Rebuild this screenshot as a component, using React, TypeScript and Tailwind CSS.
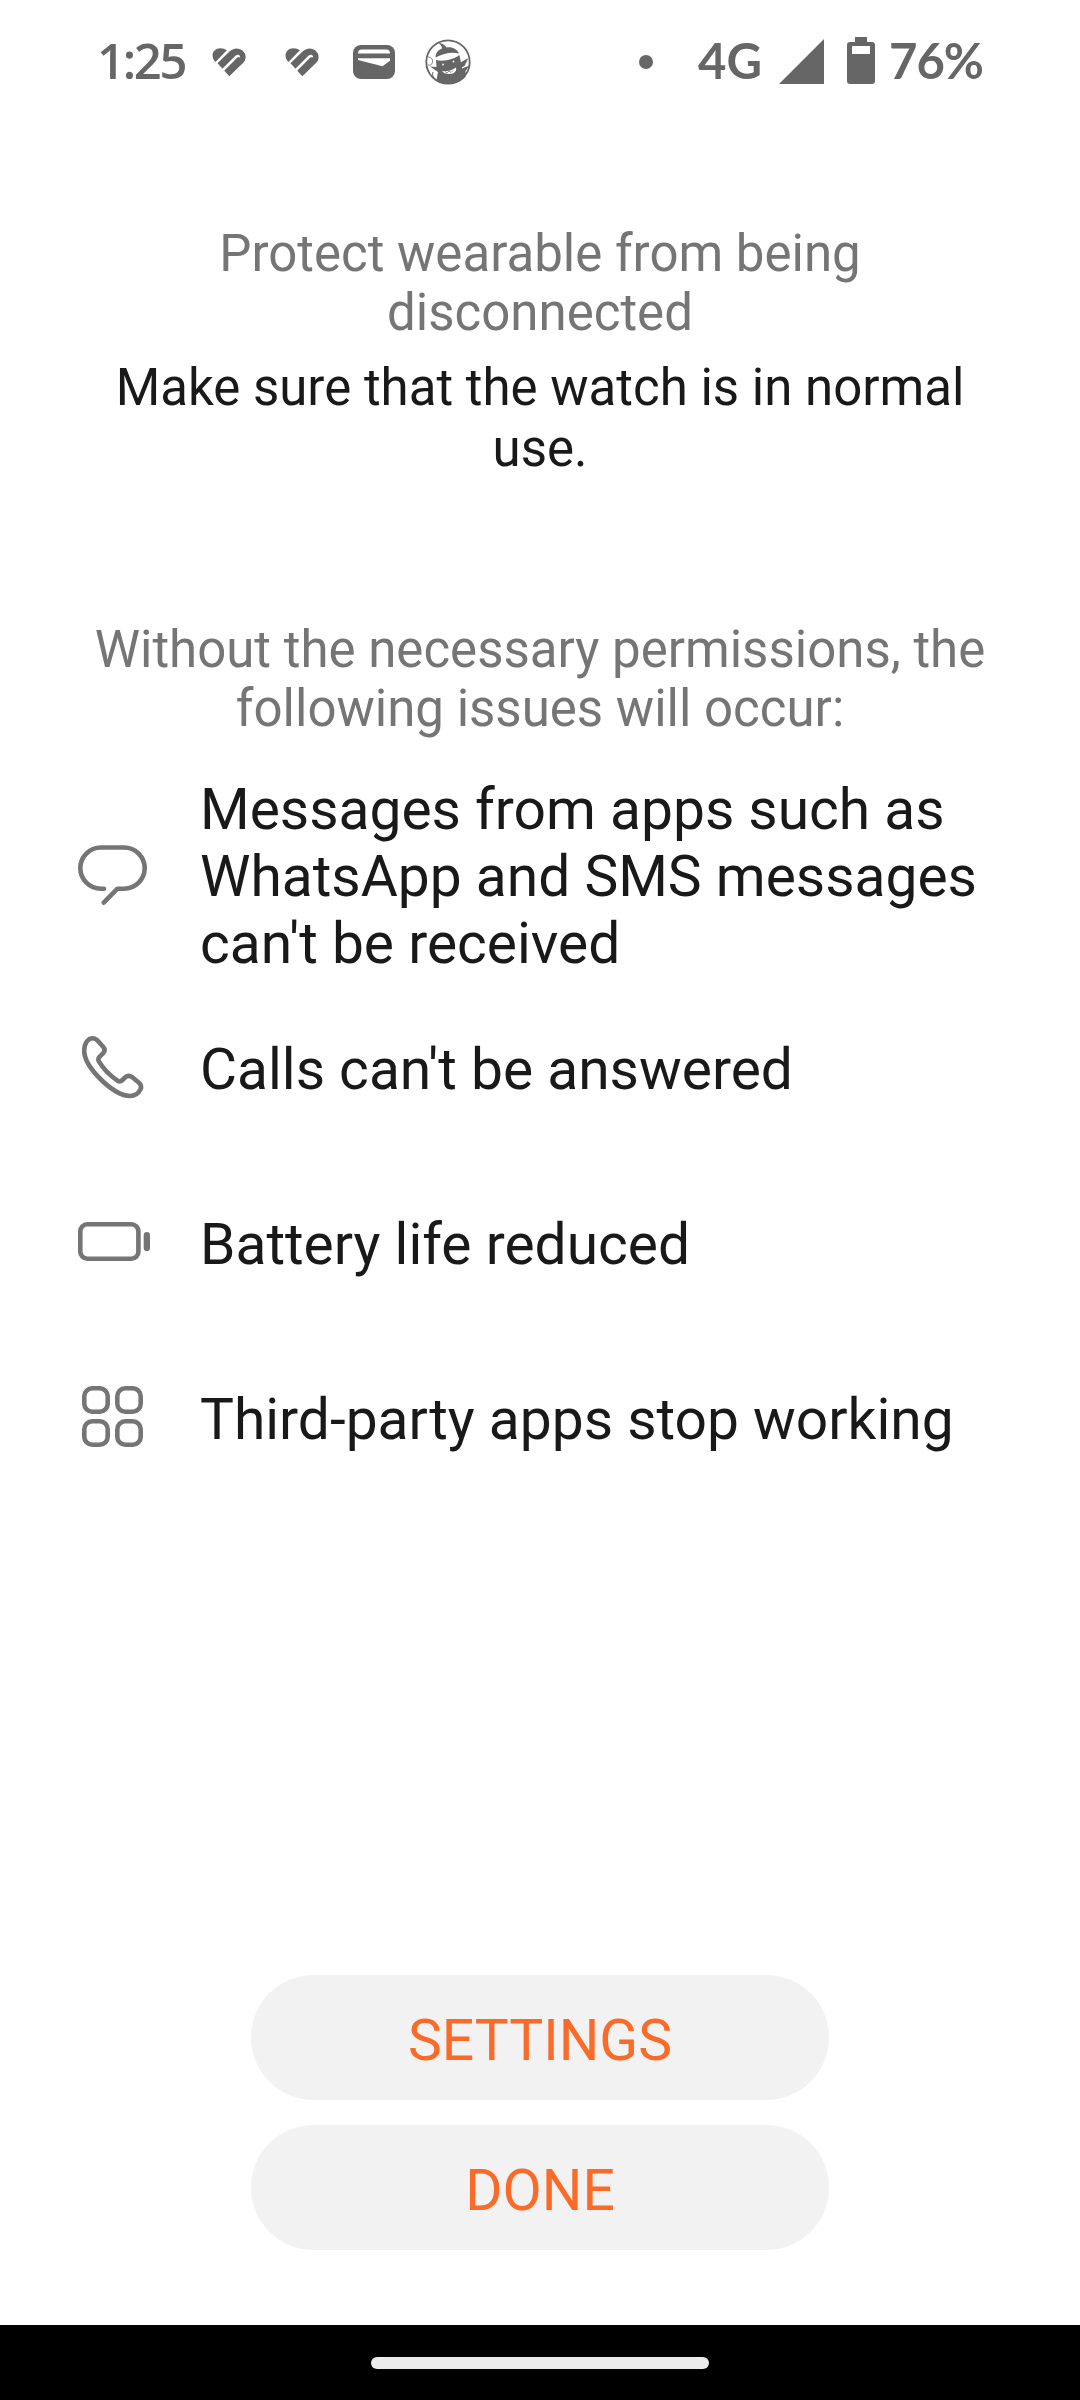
import type { ReactNode } from 'react';

interface Issue {
    id: string;
    text: string;
    icon: ReactNode;
    rowClass: string;
    textClass: string;
}

const HeartIcon = () => (
    <svg width="34" height="29" viewBox="0 0 34 29">
        <path d="M3.500 14C-2 8.500.5.300 8.500.300c2.500 0 4.500.7 6.300 2z" fill="#666" />
        <path d="M5.500 15.200 18 3C22-.500 27.500-.500 31 3s3.500 8.500 0 12L17.300 28.200z" fill="#666" />
        <path d="M9 24 24.500 8.500c1.200-1 2.500-.5 2.500.8" fill="none" stroke="#fff" strokeWidth="2.600" />
    </svg>
);

const WalletIcon = () => (
    <svg width="42" height="34" viewBox="0 0 42 34">
        <rect width="42" height="34" rx="8" fill="#666" />
        <path d="M5 8.500C5 5.500 6.500 4.500 8.500 4.500h25c2 0 3.500 1 3.500 4z" fill="#fff" />
        <path d="M5 13.200h32v2.500L29.500 21.200 5 15z" fill="#fff" />
    </svg>
);

const AvatarIcon = () => (
    <svg width="46" height="46" viewBox="0 0 46 46">
        <circle cx="23" cy="23" r="21.700" fill="#fff" stroke="#666" strokeWidth="1.800" />
        <path d="M13 3.500c4 .5 7 2.500 8.500 5C27 7.500 32 10 34 14.500c-7-2-15-.5-23.500 4C10.500 14 13 11 17 9.500 17 7 15 5 13 3.500z" fill="#666" />
        <path d="M11 21C19 23 29 20 34.500 16l2.500 13.500 7.500-3-4 5.500.5 5C34 46.500 19 47 11.500 41l1.500-8-8-5.500 6.500.5z" fill="#666" />
        <path d="M34.500 24 43.500 19l-4 8-4 2z" fill="#666" />
        <path d="M3 18c3 0 5 2 4.500 5S5 26.500 3 26" fill="none" stroke="#666" strokeWidth="0.800" />
        <path d="M17 32c5 1 10-.5 14-3.500 1 4-2 6.500-7 6.500-3 0-6-1-7-3z" fill="#fff" />
        <path d="m20 32.500 2 1.500 2-2 2 1.500 2-2" fill="none" stroke="#666" strokeWidth="0.700" />
        <circle cx="18" cy="25.500" r="0.900" fill="#fff" />
        <circle cx="28.500" cy="22.500" r="0.900" fill="#fff" />
        <path d="M8 33c-1 3 0 5 2 7" fill="none" stroke="#666" strokeWidth="1" />
    </svg>
);

const MessageIcon = () => (
    <svg width="74" height="65" viewBox="0 0 74 65" fill="none" stroke="#757575" strokeWidth="4.600" strokeLinecap="round" strokeLinejoin="round">
        <path d="M27 44.700H23.900A20.600 20.600 0 0 1 23.900 3.500H47.100A20.600 20.600 0 0 1 47.100 44.700H40.500L26.700 58.700" />
    </svg>
);

const PhoneIcon = () => (
    <svg width="68" height="66" viewBox="0 0 68 66" fill="none" stroke="#757575" strokeWidth="4.600" strokeLinejoin="round">
        <path d="M4.200 16.500C4.400 9 8 4.200 12.700 4.200C15 4.200 16.500 5.300 18 7L23.300 13C25 15 25 17.200 23.200 19.200L19.500 22.800C18 24.500 18 26 19 27.700C23.500 35 30.500 42 37.500 46.700C39.300 47.800 41 47.500 42.500 46L45 43.500C47.300 41.500 49.800 41.500 52 43L59 48.700C61 50.500 61.500 53 60.500 55.300C58.500 59.500 55 61.800 50 62C33 61.500 4 33 4.200 16.500Z" />
    </svg>
);

const BatteryIcon = () => (
    <svg width="74" height="41" viewBox="0 0 74 41">
        <rect x="3.300" y="3.300" width="58.100" height="34.400" rx="7" fill="none" stroke="#757575" strokeWidth="4.600" />
        <rect x="66.700" y="11" width="6.300" height="19" rx="3.100" fill="#757575" />
    </svg>
);

const AppsIcon = () => (
    <svg width="64" height="61" viewBox="0 0 64 61" fill="none" stroke="#757575" strokeWidth="4.600">
        <rect x="2.300" y="2.300" width="23.400" height="23.400" rx="8" />
        <rect x="35.300" y="2.300" width="23.400" height="23.400" rx="8" />
        <rect x="2.300" y="35.300" width="23.400" height="23.400" rx="8" />
        <rect x="35.300" y="35.300" width="23.400" height="23.400" rx="8" />
    </svg>
);

const issues: Issue[] = [
    { id: 'messages', text: "Messages from apps such as WhatsApp and SMS messages can't be received", icon: <MessageIcon />, rowClass: 'h-[201px] mb-[2px]', textClass: '' },
    { id: 'calls', text: "Calls can't be answered", icon: <PhoneIcon />, rowClass: 'h-[175px]', textClass: 'pt-[6px]' },
    { id: 'battery', text: 'Battery life reduced', icon: <BatteryIcon />, rowClass: 'h-[175px]', textClass: 'pt-[6px]' },
    { id: 'apps', text: 'Third-party apps stop working', icon: <AppsIcon />, rowClass: 'h-[175px]', textClass: 'pt-[6px]' },
];

function StatusBar() {
    return (
        <div className="flex h-[124px] items-center justify-between px-[97px] font-[Lato,sans-serif] text-[49px] font-semibold text-[#666]">
            <div className="flex items-center">
                <span className="w-[115px] whitespace-nowrap pb-[2px] font-['Open_Sans',sans-serif] tracking-[-2.300px]">1:25</span>
                <div className="flex w-[73px]"><HeartIcon /></div>
                <div className="flex w-[68px]"><HeartIcon /></div>
                <div className="flex w-[72px]"><WalletIcon /></div>
                <AvatarIcon />
            </div>
            <div className="flex items-center">
                <span className="mr-[45px] size-[14px] rounded-full bg-[#666]" />
                <span className="w-[81px] whitespace-nowrap pb-[3px] font-bold">4G</span>
                <svg className="mr-[23px] -mt-[2px]" width="45" height="45" viewBox="0 0 45 45">
                    <path d="M45 0v45H0z" fill="#666" />
                </svg>
                <svg className="mr-[14px] -mt-[3px]" width="28" height="47" viewBox="0 0 28 47">
                    <path fillRule="evenodd" d="M8 0h12v5h5a3 3 0 0 1 3 3v36a3 3 0 0 1-3 3H3a3 3 0 0 1-3-3V8a3 3 0 0 1 3-3h5zM5 9v8h18V9z" fill="#666" />
                </svg>
                <span className="w-[94px] whitespace-nowrap pb-[3px] font-bold tracking-[-1px]">76%</span>
            </div>
        </div>
    );
}

export default function App() {
    return (
        <div className="flex h-[2400px] w-[1080px] flex-col bg-white font-[Roboto,sans-serif] text-[#191919]">
            <StatusBar />

            {/* Intro */}
            <div className="pt-[100px] text-center text-[51px]">
                <p className="leading-[59px] text-[#757575]">Protect wearable from being<br />disconnected</p>
                <p className="mt-[15px] leading-[61px]">Make sure that the watch is in normal<br />use.</p>
            </div>

            {/* Issues */}
            <p className="mt-[141px] text-center text-[51px] leading-[59px] text-[#757575]">
                Without the necessary permissions, the<br />following issues will occur:
            </p>
            <div className="mt-[38px] flex flex-col pl-[77px]">
                {issues.map(issue => (
                    <div key={issue.id} className={`flex items-center ${issue.rowClass}`}>
                        <div className="flex w-[74px] shrink-0 justify-center">{issue.icon}</div>
                        <p className={`ml-[49px] w-[800px] text-[56.900px] leading-[67px] ${issue.textClass}`}>{issue.text}</p>
                    </div>
                ))}
            </div>

            {/* Actions */}
            <div className="mt-auto flex flex-col items-center gap-[25px] pb-[75px]">
                <button className="h-[125px] w-[578px] rounded-full bg-[#f2f2f2] pt-[6px] text-[57px] text-[#fa6a29]">SETTINGS</button>
                <button className="h-[125px] w-[578px] rounded-full bg-[#f2f2f2] pt-[6px] text-[57px] text-[#fa6a29]">DONE</button>
            </div>

            {/* Navigation bar */}
            <div className="flex h-[75px] items-center justify-center bg-black">
                <div className="h-3 w-[338px] rounded-full bg-[#ebebeb]" />
            </div>
        </div>
    );
}
